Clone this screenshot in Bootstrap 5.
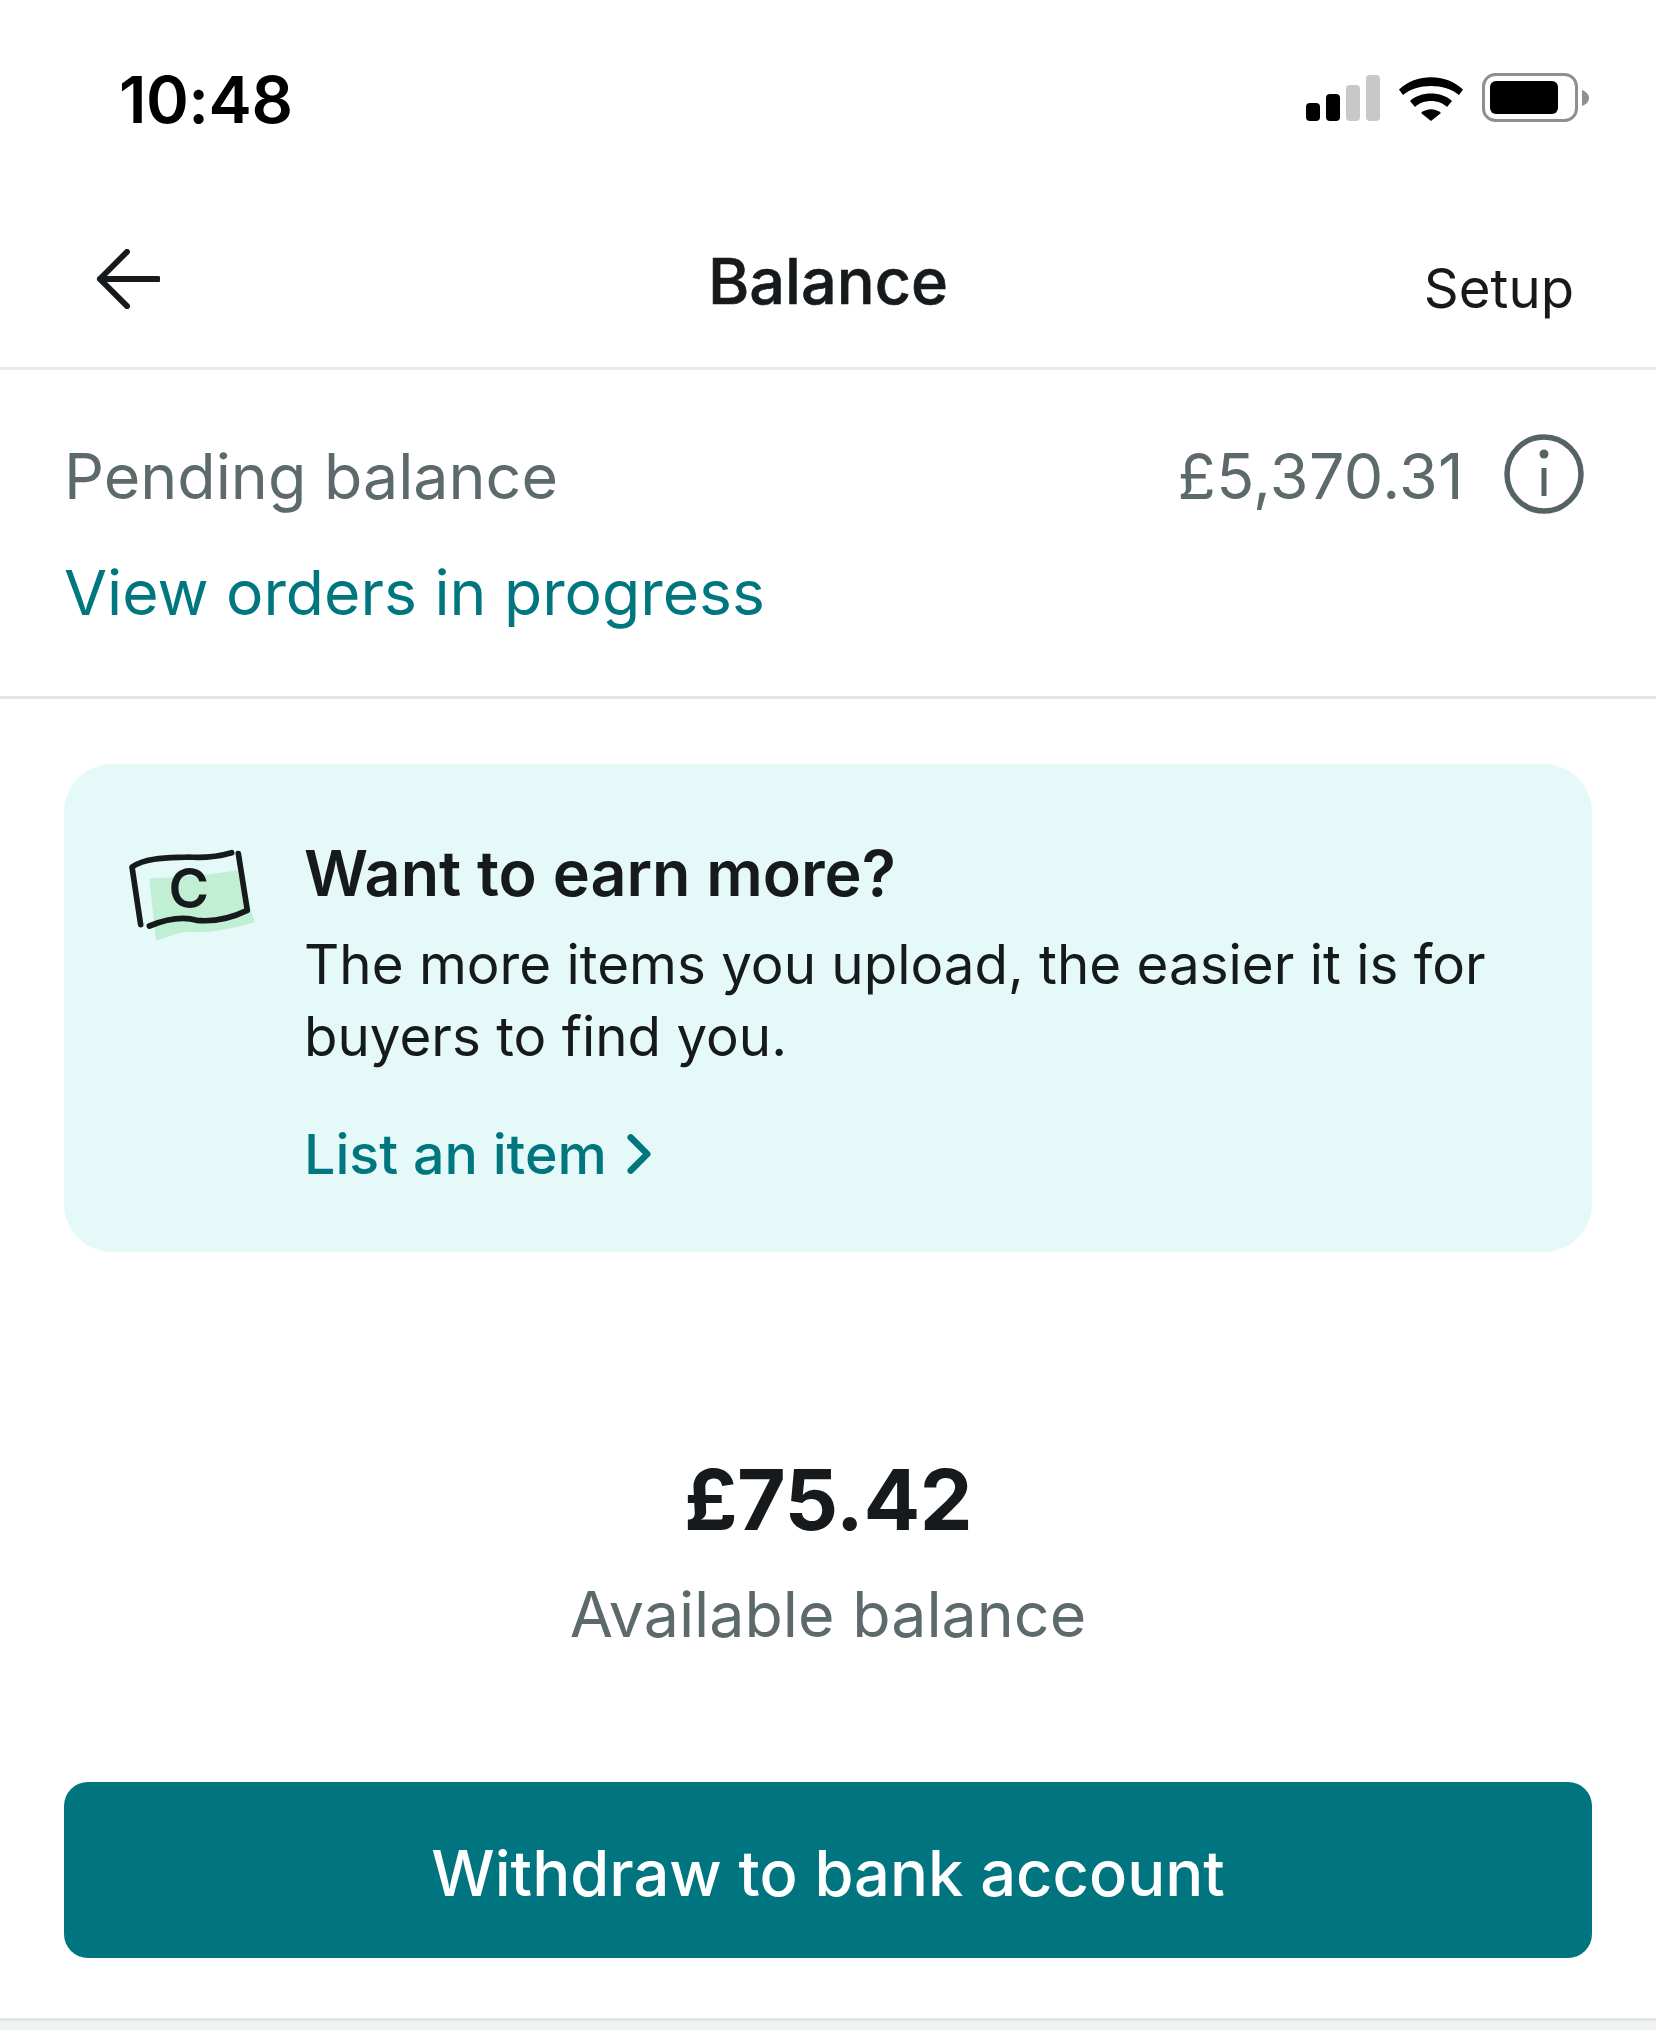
<!DOCTYPE html>
<html lang="en">
<head>
<meta charset="utf-8">
<title>Balance</title>
<link href="https://cdn.jsdelivr.net/npm/bootstrap@5.3.0/dist/css/bootstrap.min.css" rel="stylesheet">
<style>
html,body{height:2030px;overflow:hidden;background:#fff;}
body{font-family:Inter,"Liberation Sans",sans-serif;color:#171a1c;}
.screen{height:2030px;}
.statusbar{height:193px;padding:0 62px 0 119px;}
.clock{font-size:65px;font-weight:600;line-height:1;color:#000;letter-spacing:-.5px;margin-top:6px;}
.signal{display:block;margin-top:12px;}
.topbar{height:177px;border-bottom:3px solid #e8e9e9;padding:0 82px 0 96px;position:relative;}
.back-ico{margin-top:-3px;}
.bar-title{font-size:63px;font-weight:500;line-height:1;position:absolute;left:0;right:0;text-align:center;top:57px;-webkit-text-stroke:.6px #171a1c;}
.bar-action{font-size:54.500px;line-height:1;margin-top:16px;}
.pending{height:329px;border-bottom:3px solid #e4e6e6;padding:67px 72px 0 64px;}
.muted-t{color:#5d6a6c;}
.pend-t{font-size:62.700px;line-height:1;}
.pend-label{margin-top:2px;}
.pend-gap{gap:40px;}
.pend-num{letter-spacing:.4px;margin-top:2px;}
.info-ico{margin-top:-3px;}
.view-t{font-size:62.400px;line-height:1;color:#00777f;margin-top:48px;}
.tip{background:#e6f9f9;border-radius:48px;margin:65px 64px 0;height:488px;padding:56px 60px 0 26px;}
.note-ico{margin:2px 14px 0 0;}
.tip h2{font-size:62.800px;font-weight:600;line-height:1;margin:0;padding-top:22px;}
.tip p{font-size:54.700px;line-height:72px;margin:23px 0 0;}
.tip-link{font-size:55.500px;font-weight:500;line-height:1;color:#00777f;margin-top:54px;gap:20px;}
.amount{font-size:84px;font-weight:700;line-height:1;margin-top:206px;letter-spacing:-.5px;}
.avail{font-size:62.700px;line-height:1;margin-top:41px;}
.withdraw{display:block;background:#00757f;color:#fff;border-radius:24px;height:176px;margin:136px 64px 0;font-size:63.200px;font-weight:500;line-height:182px;border:0;width:1528px;padding:0;}
.foot-strip{flex:1;background:#eff3f4;border-top:3px solid #e4e6e6;margin-top:60px;}
</style>
</head>
<body>
<div class="screen d-flex flex-column">
  <div class="statusbar d-flex align-items-center justify-content-between">
    <div class="clock">10:48</div>
    <svg class="signal" width="288" height="60" viewBox="0 0 288 60" role="img" aria-label="Signal, wifi and battery">
      <rect x="0" y="30" width="14" height="18" rx="4" fill="#000"/>
      <rect x="20" y="21" width="14" height="27" rx="4" fill="#000"/>
      <rect x="40" y="12" width="14" height="36" rx="4" fill="#c8c8c8"/>
      <rect x="60" y="2" width="14" height="46" rx="4" fill="#c8c8c8"/>
      <path d="M93 12.500C110 -4 140 -4 157 12.500L153 18C139 6 111 6 97 18Z" fill="#000" transform="translate(0 4)"/>
      <path d="M104 27C114 17 136 17 146 27L141 33C133 25 117 25 109 33Z" fill="#000" transform="translate(0 1)"/>
      <path d="M115 40C121 35 129 35 135 40L125 48Z" fill="#000"/>
      <rect x="177.500" y="1.500" width="93" height="46" rx="12" fill="none" stroke="#8f8f8f" stroke-width="3"/>
      <rect x="184" y="8" width="68" height="33" rx="6" fill="#000"/>
      <path d="M276 17C281 19 283 22 283 25C283 28 281 31 276 33Z" fill="#8f8f8f"/>
    </svg>
  </div>
  <div class="topbar d-flex align-items-center justify-content-between">
    <svg class="back-ico" width="64" height="60" viewBox="0 0 66 60" role="img" aria-label="Back">
      <path d="M64 30H4M32 2L4 30L32 58" fill="none" stroke="#171a1c" stroke-width="6" stroke-linecap="round" stroke-linejoin="round"/>
    </svg>
    <div class="bar-title">Balance</div>
    <div class="bar-action">Setup</div>
  </div>
  <div class="pending">
    <div class="d-flex align-items-center justify-content-between pend-t muted-t">
      <span class="pend-label">Pending balance</span>
      <span class="d-flex align-items-center pend-gap"><span class="pend-num">£5,370.31</span>
        <svg class="info-ico" width="80" height="80" viewBox="0 0 80 80" role="img" aria-label="Info">
          <circle cx="40" cy="40" r="37" fill="none" stroke="#566365" stroke-width="5.500"/>
          <circle cx="40" cy="20" r="4.500" fill="#566365"/>
          <path d="M40 34V62" stroke="#566365" stroke-width="5"/>
        </svg>
      </span>
    </div>
    <div class="view-t">View orders in progress</div>
  </div>
  <div class="tip d-flex">
    <svg class="flex-shrink-0 note-ico" width="200" height="130" viewBox="0 0 600 390" role="img" aria-label="Banknote">
      <path d="M178 170C250 165 320 165 440 145L495 300C430 320 360 335 290 330C260 330 230 350 198 355Z" fill="#c1efd3"/>
      <path d="M152 308L126 135C170 105 240 108 295 105C340 108 380 105 425 92" fill="none" stroke="#171a1c" stroke-width="17" stroke-linecap="round" stroke-linejoin="round"/>
      <path d="M445 95L472 265C420 290 370 300 320 295C270 280 220 295 178 312" fill="none" stroke="#171a1c" stroke-width="17" stroke-linecap="round" stroke-linejoin="round"/>
      <text x="296" y="258" text-anchor="middle" font-family="Inter,sans-serif" font-size="165" font-weight="600" fill="#171a1c">C</text>
    </svg>
    <div>
      <h2>Want to earn more?</h2>
      <p>The more items you upload, the easier it is for buyers to find you.</p>
      <div class="tip-link d-flex align-items-center">List an item
        <svg width="24" height="42" viewBox="0 0 26 44" aria-hidden="true"><path d="M4 4L22 22L4 40" fill="none" stroke="#00777f" stroke-width="7" stroke-linecap="round" stroke-linejoin="round"/></svg>
      </div>
    </div>
  </div>
  <div class="amount text-center">£75.42</div>
  <div class="avail text-center muted-t">Available balance</div>
  <button type="button" class="withdraw btn">Withdraw to bank account</button>
  <div class="foot-strip"></div>
</div>
<script src="https://cdn.jsdelivr.net/npm/bootstrap@5.3.0/dist/js/bootstrap.bundle.min.js"></script>
</body>
</html>
